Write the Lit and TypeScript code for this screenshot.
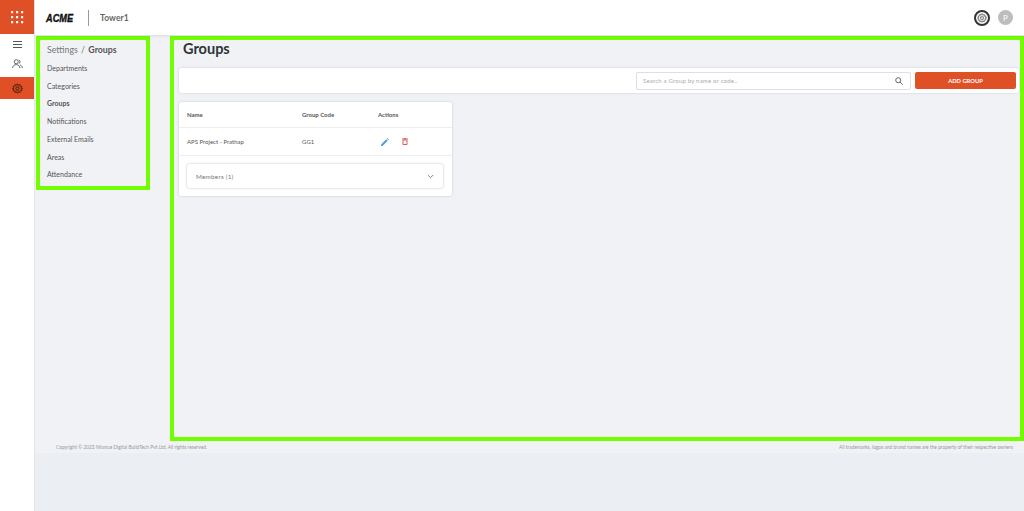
import { LitElement, html, svg, css } from "lit";
import { customElement } from "lit/decorators.js";

const NAV = ["Departments", "Categories", "Groups", "Notifications", "External Emails", "Areas", "Attendance"];

const gear = (size: number, color: string, width = 1.4) => html`<svg width=${size} height=${size} viewBox="0 0 16 16" fill="none" stroke=${color} stroke-width=${width}>
  <path d="M8 1.5l1.4 1.5 2-.4.6 2 2 .6-.4 2L15 8l-1.4.9.4 2-2 .6-.6 2-2-.4L8 14.5l-1.4-1.4-2 .4-.6-2-2-.6.4-2L1 8l1.4-.9-.4-2 2-.6.6-2 2 .4z"/>
  <circle cx="8" cy="8" r="2.4"/></svg>`;

const DOTS = [1, 6, 11];

@customElement("app-root")
export class AppRoot extends LitElement {
  static styles = css`
    :host { display: block; width: 1024px; height: 511px; overflow: hidden; font-family: Lato, "Open Sans", sans-serif; color: #4a4a4a; background: #ebeef3; }
    * { box-sizing: border-box; }
    .shell { display: flex; height: 511px; }
    .rail { width: 34px; flex: none; background: #fff; display: flex; flex-direction: column; }
    .brand { height: 34px; background: #df5027; display: flex; align-items: center; justify-content: center; }
    .rail-item { height: 20px; display: flex; align-items: center; justify-content: center; }
    .burger { margin-top: 0; }
    .people { height: 19px; }
    .active { height: 22px; background: #df5027; margin-top: 4px; }
    .right { flex: 1; min-width: 0; display: flex; flex-direction: column; border-left: 1px solid #e4e5e8; }
    .top { height: 35px; flex: none; background: #fff; display: flex; align-items: center; padding: 0 11px 0 11px; box-shadow: 0 1px 3px rgba(0,0,0,.1); position: relative; }
    .logo { font: italic 900 11.5px "Liberation Sans", sans-serif; color: #111; -webkit-text-stroke: .4px #111; width: 42px; transform: scaleX(.8); transform-origin: left; }
    .sep { width: 1px; height: 16px; background: #999; }
    .tower { margin-left: 11px; font-size: 8.5px; font-weight: 700; color: #666; letter-spacing: .1px; flex: 1; }
    .settings { width: 16px; height: 16px; border-radius: 50%; border: 2px solid #333; display: flex; align-items: center; justify-content: center; margin-right: 8px; }
    .avatar { width: 15px; height: 15px; border-radius: 50%; background: #bdbdbd; color: #fff; font-size: 8px; display: flex; align-items: center; justify-content: center; }
    .page { height: 418px; flex: none; background: #f0f2f5; display: flex; flex-direction: column; }
    .cols { height: 406px; flex: none; display: flex; align-items: flex-start; padding: 1px 0 0 1px; }
    .side { width: 114px; height: 154px; flex: none; border: 4px solid #73fe00; padding: 3px 0 0 7px; }
    .crumb { font-size: 8.8px; line-height: 13px; color: #777; margin-bottom: 4px; }
    .crumb b { color: #555; font-weight: 700; }
    .crumb i { font-style: normal; margin: 0 1px; }
    .nav { font-size: 7px; line-height: 17.7px; color: #555; }
    .nav.on { font-weight: 700; }
    .main { width: 854px; height: 405px; margin-left: 20px; border: 4px solid #73fe00; padding: 0 1px 0 5px; flex: none; }
    h1 { margin: 0; font-size: 14.5px; line-height: 18px; font-weight: 700; color: #2f3438; padding-left: 4px; }
    .bar { margin-top: 10px; height: 25px; background: #fff; border-radius: 3px; box-shadow: 0 0 2px rgba(60,70,100,.25); display: flex; align-items: center; justify-content: flex-end; padding-right: 3px; }
    .search { width: 275px; height: 18px; border: 1px solid #dcdfe4; border-radius: 2px; display: flex; align-items: center; justify-content: space-between; padding: 0 7px 0 6px; font-size: 6px; color: #aaa; letter-spacing: .2px; }
    .add { width: 101px; height: 17px; margin-left: 4px; background: #df5027; border-radius: 2px; color: #fff; font-size: 5.8px; font-weight: 700; display: flex; align-items: center; justify-content: center; }
    .card { margin-top: 9px; width: 273px; height: 94px; background: #fff; border-radius: 2px; box-shadow: 0 0 2px rgba(60,70,100,.3); display: flex; flex-direction: column; }
    .row { display: grid; grid-template-columns: 115px 76px 1fr; padding-left: 8px; align-items: center; font-size: 6px; color: #555; border-bottom: 1px solid #eceef1; }
    .head { height: 26px; font-weight: 700; }
    .body { height: 28px; }
    .acts { display: flex; gap: 13px; align-items: center; margin-left: 3px; }
    .members-wrap { padding: 8px 9px 0 8px; }
    .members { height: 24px; border-radius: 2px; box-shadow: 0 0 2px rgba(60,70,100,.45); display: flex; align-items: center; justify-content: space-between; padding: 0 9px 0 9px; font-size: 6.4px; color: #777; letter-spacing: .2px; }
    .foot { flex: 1; display: flex; justify-content: space-between; align-items: center; padding: 0 11px 0 21px; font-size: 4.85px; color: #999; }
    .rest { flex: 1; background: #ebeef3; }
  `;

  render() {
    return html`<div class="shell">
      <div class="rail">
        <div class="brand"><svg width="13" height="13" viewBox="0 0 13 13" fill="#fff">
          ${DOTS.flatMap((y) => DOTS.map((x) => svg`<rect x=${x - 1} y=${y - 1} width="2.2" height="2.2" rx=".3"/>`))}
        </svg></div>
        <div class="rail-item burger"><svg width="9" height="7" viewBox="0 0 9 7" stroke="#555" stroke-width="1"><path d="M0 .5h9M0 3.5h9M0 6.5h9"/></svg></div>
        <div class="rail-item people"><svg width="11" height="10" viewBox="0 0 12 11" fill="none" stroke="#555" stroke-width="1"><circle cx="4.6" cy="3" r="2.2"/><path d="M.6 10c.3-2.6 1.8-3.8 4-3.8s3.7 1.2 4 3.8M7.4 1a2.2 2.2 0 010 4.1M9 6.6c1.4.5 2.2 1.7 2.4 3.4"/></svg></div>
        <div class="rail-item active">${gear(11, "#6e2610", 1.7)}</div>
      </div>
      <div class="right">
        <div class="top">
          <div class="logo">ACME</div>
          <div class="sep"></div>
          <div class="tower">Tower1</div>
          <div class="settings">${gear(10, "#888", 2)}</div>
          <div class="avatar">P</div>
        </div>
        <div class="page">
          <div class="cols">
            <div class="side">
              <div class="crumb">Settings<i> / </i><b>Groups</b></div>
              ${NAV.map((n) => html`<div class="nav ${n === "Groups" ? "on" : ""}">${n}</div>`)}
            </div>
            <div class="main">
              <h1>Groups</h1>
              <div class="bar">
                <div class="search"><span>Search a Group by name or code..</span>
                  <svg width="8" height="8" viewBox="0 0 8 8" fill="none" stroke="#666" stroke-width="1"><circle cx="3.2" cy="3.2" r="2.5"/><path d="M5 5l2.7 2.7"/></svg></div>
                <div class="add">ADD GROUP</div>
              </div>
              <div class="card">
                <div class="row head"><span>Name</span><span>Group Code</span><span>Actions</span></div>
                <div class="row body"><span>APS Project - Prathap</span><span>GG1</span>
                  <span class="acts">
                    <svg width="8" height="8" viewBox="0 0 8 8"><path d="M0 8V6.4L5.2 1.2l1.6 1.6L1.6 8zM5.8.6L6.4 0 8 1.6l-.6.6z" fill="#5b9fe0"/></svg>
                    <svg width="6" height="7" viewBox="0 0 6 7" fill="none" stroke="#e05a5a" stroke-width="1"><path d="M1 2h4v4.5H1zM0 1h6M2 .5h2"/></svg>
                  </span></div>
                <div class="members-wrap"><div class="members"><span>Members (1)</span>
                  <svg width="7" height="5" viewBox="0 0 7 5" fill="none" stroke="#777" stroke-width=".9"><path d="M.8 1l2.7 2.7L6.2 1"/></svg></div></div>
              </div>
            </div>
          </div>
          <div class="foot"><span>Copyright © 2023 Nhance Digital BuildTech Pvt Ltd. All rights reserved.</span><span>All trademarks, logos and brand names are the property of their respective owners</span></div>
        </div>
        <div class="rest"></div>
      </div>
    </div>`;
  }
}
